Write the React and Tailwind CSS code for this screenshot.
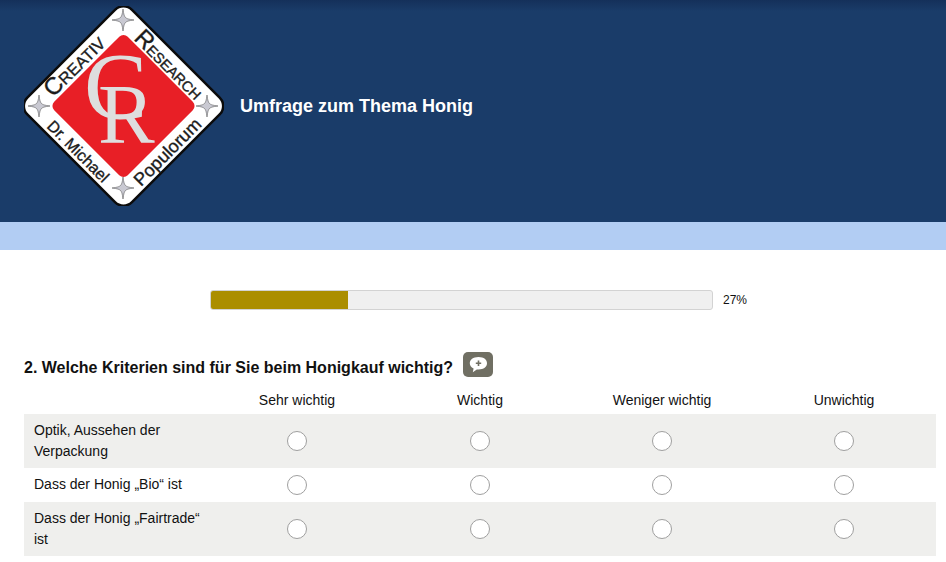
const columns = ["Sehr wichtig", "Wichtig", "Weniger wichtig", "Unwichtig"];

const rows = [
  { label: "Optik, Aussehen der Verpackung", shaded: true, height: "h-[54px]", labelClass: "" },
  { label: "Dass der Honig „Bio“ ist", shaded: false, height: "h-[34px]", labelClass: "pb-0.5" },
  { label: "Dass der Honig „Fairtrade“ ist", shaded: true, height: "h-[54px]", labelClass: "" },
];

const starPath = "M0 -11 Q1 -3 2.6 -2.6 Q3 -1 11 0 Q3 1 2.6 2.6 Q1 3 0 11 Q-1 3 -2.6 2.6 Q-3 1 -11 0 Q-3 -1 -2.6 -2.6 Q-1 -3 0 -11 Z";

function Logo() {
  return (
    <svg viewBox="0 0 200 200" className="w-[200px] h-[200px] shrink-0">
      <rect x="25.5" y="26" width="148" height="148" rx="12" transform="rotate(45 99.5 100)" fill="#ffffff" stroke="#0b0b0b" strokeWidth="2.5" />
      <rect x="47.5" y="48" width="104" height="104" rx="6" transform="rotate(45 99.5 100)" fill="#e81f26" />
      {[[99, 14], [183, 100], [99, 182], [15, 100]].map(([x, y]) => (
        <path key={`${x}-${y}`} d={starPath} transform={`translate(${x} ${y})`} fill="#c9c9d2" stroke="#444444" strokeWidth="0.5" />
      ))}
      <text x="60" y="113" fontFamily="'Liberation Serif', serif" fontSize="95" fill="#dedede">C</text>
      <text x="74" y="137" fontFamily="'Liberation Serif', serif" fontSize="85" fill="#dedede">R</text>
      <g fontFamily="'Liberation Sans', sans-serif" fill="#1c1c1c" stroke="#1c1c1c" strokeWidth="0.35">
        <text transform="translate(29 92) rotate(-45)" fontSize="24">C<tspan fontSize="16.5">REATIV</tspan></text>
        <text transform="translate(109 33) rotate(45)" fontSize="24">R<tspan fontSize="14.5">ESEARCH</tspan></text>
        <text transform="translate(22 121) rotate(45)" fontSize="16">Dr. Michael</text>
        <text transform="translate(117 181) rotate(-45)" fontSize="18">Populorum</text>
      </g>
    </svg>
  );
}

function CommentIcon() {
  return (
    <span className="w-[30px] h-[25px] rounded-[5px] bg-[#706f63] flex items-center justify-center ml-[10px]">
      <svg viewBox="0 0 30 25" className="w-[30px] h-[25px]">
        <path d="M15.5 5 C21 5 24 7.8 24 11.3 C24 15 20.8 17.5 15.5 17.5 L13.8 17.5 L9.8 20.3 L10.6 16.4 C8 15.3 6.8 13.5 6.8 11.3 C6.8 7.8 10 5 15.5 5 Z" fill="#ffffff" />
        <path d="M15.5 8.5 V14 M12.8 11.2 H18.2" stroke="#706f63" strokeWidth="1.6" fill="none" />
      </svg>
    </span>
  );
}

export default function App() {
  return (
    <div className="w-[946px] h-[562px] overflow-hidden bg-white text-[#111111] font-['Liberation_Sans',Arial,sans-serif]">
      <header className="h-[222px] bg-gradient-to-b from-[#14305a] from-0% to-[#1a3c69] to-[5%] flex items-center pl-6 pb-[10px]">
        <Logo />
        <h1 className="ml-4 text-[18px] font-bold text-white">Umfrage zum Thema Honig</h1>
      </header>
      <div className="h-7 bg-[#b2cdf3]" />

      <div className="flex items-center mt-10 ml-[210px]">
        <div className="w-[503px] h-5 rounded-[3px] border border-[#d3d3d3] bg-[#f0f0f0] overflow-hidden">
          <div className="w-[27.4%] h-full bg-[#ab8e00]" />
        </div>
        <span className="ml-[10px] text-xs">27%</span>
      </div>

      <div className="flex items-end mt-[41px] ml-6 h-[26px]">
        <h2 className="text-base font-bold leading-[22px] mb-[-2px]">2. Welche Kriterien sind für Sie beim Honigkauf wichtig?</h2>
        <CommentIcon />
      </div>

      <div className="ml-6 w-[912px] mt-[11px] text-sm">
        <div className="grid grid-cols-[182px_182px_184px_180px_184px] h-[24px] mb-[2px] items-center text-center">
          <span />
          {columns.map((col) => (
            <span key={col}>{col}</span>
          ))}
        </div>
        {rows.map((row) => (
          <div key={row.label} className={`grid grid-cols-[182px_182px_184px_180px_184px] items-center ${row.height} ${row.shaded ? "bg-[#efefed]" : "bg-white"}`}>
            <span className={`pl-[10px] leading-[21px] ${row.labelClass}`}>{row.label}</span>
            {columns.map((col) => (
              <span key={col} className="flex justify-center">
                <span className="w-5 h-5 rounded-full border border-[#9f9f9f] bg-white" />
              </span>
            ))}
          </div>
        ))}
      </div>
    </div>
  );
}
